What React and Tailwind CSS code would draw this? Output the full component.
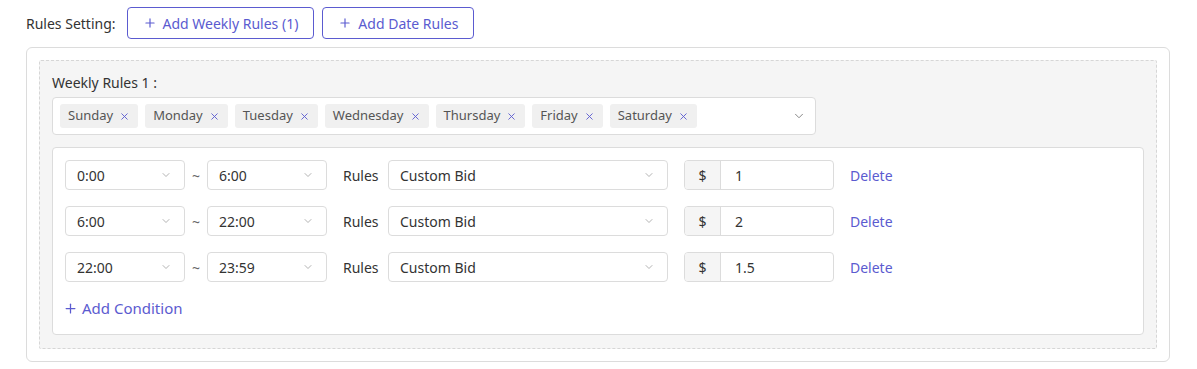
import { ChevronDown, Plus, X } from 'lucide-react'

const days = ['Sunday', 'Monday', 'Tuesday', 'Wednesday', 'Thursday', 'Friday', 'Saturday']

const rows = [
  { from: '0:00', to: '6:00', bid: '1' },
  { from: '6:00', to: '22:00', bid: '2' },
  { from: '22:00', to: '23:59', bid: '1.5' },
]

function Select({ value, className }) {
  return (
    <div className={`h-[30px] bg-white border border-[#dcdcdc] rounded-[4px] flex items-center justify-between pl-[11px] pr-[12px] ${className}`}>
      <span className="text-[14px] text-[#333]">{value}</span>
      <ChevronDown size={12} strokeWidth={1.5} className="text-[#999]" />
    </div>
  )
}

export default function App() {
  return (
    <div className="w-[1197px] h-[369px] bg-white font-['Noto_Sans',sans-serif] text-[#333] pt-[7px] px-[26px] overflow-hidden">
      {/* Header */}
      <div className="flex items-center gap-2 h-[32px]">
        <span className="text-[14px] mr-[3px]">Rules Setting:</span>
        <button className="h-[32px] px-[15px] border border-[#5b5bd0] rounded-[4px] text-[#5b5bd0] text-[14px] flex items-center gap-[6px]">
          <Plus size={14} strokeWidth={2} /> Add Weekly Rules (1)
        </button>
        <button className="h-[32px] px-[15px] border border-[#5b5bd0] rounded-[4px] text-[#5b5bd0] text-[14px] flex items-center gap-[6px]">
          <Plus size={14} strokeWidth={2} /> Add Date Rules
        </button>
      </div>

      {/* Card */}
      <div className="mt-[8px] w-[1144px] border border-[#dcdcdc] rounded-[6px] p-[12px]">
        <div className="bg-[#f5f5f5] border border-dashed border-[#d6d6d6] rounded-[2px] px-[12px] pt-[12px] pb-[13px]">
          <div className="text-[14px] leading-[20px] mb-[4px]">Weekly Rules 1 :</div>
          <div className="w-[764px] h-[38px] bg-white border border-[#dcdcdc] rounded-[4px] flex items-center pl-[7px] pr-[9px]">
            <div className="flex items-center gap-[7px] flex-1">
              {days.map(d => (
                <span key={d} className="h-[24px] bg-[#f0f0f0] rounded-[3px] px-[8px] flex items-center gap-[6px] text-[13px] text-[#555]">
                  {d}
                  <X size={11} strokeWidth={2} className="text-[#5b5bd0]" />
                </span>
              ))}
            </div>
            <ChevronDown size={14} strokeWidth={1.5} className="text-[#777]" />
          </div>

          <div className="mt-[12px] bg-white border border-[#dcdcdc] rounded-[4px] px-[12px] pt-[12px] pb-[16px]">
            <div className="flex flex-col gap-[16px]">
              {rows.map((r, i) => (
                <div key={i} className="flex items-center h-[30px]">
                  <Select value={r.from} className="w-[120px]" />
                  <span className="w-[22px] text-center text-[14px] text-[#666]">~</span>
                  <Select value={r.to} className="w-[120px]" />
                  <span className="ml-[16px] text-[14px] w-[45px]">Rules</span>
                  <Select value="Custom Bid" className="w-[280px]" />
                  <div className="ml-[16px] w-[150px] h-[30px] flex border border-[#dcdcdc] rounded-[4px] overflow-hidden">
                    <span className="w-[36px] bg-[#f5f5f5] border-r border-[#dcdcdc] flex items-center justify-center text-[14px]">$</span>
                    <span className="flex-1 flex items-center pl-[14px] text-[14px]">{r.bid}</span>
                  </div>
                  <span className="ml-[16px] text-[14px] text-[#5b5bd0]">Delete</span>
                </div>
              ))}
            </div>
            <div className="mt-[16px] flex items-center gap-[4px] text-[#5b5bd0] text-[15px] leading-[20px]">
              <Plus size={15} strokeWidth={2} className="-ml-[2px]" /> Add Condition
            </div>
          </div>
        </div>
      </div>
    </div>
  )
}
